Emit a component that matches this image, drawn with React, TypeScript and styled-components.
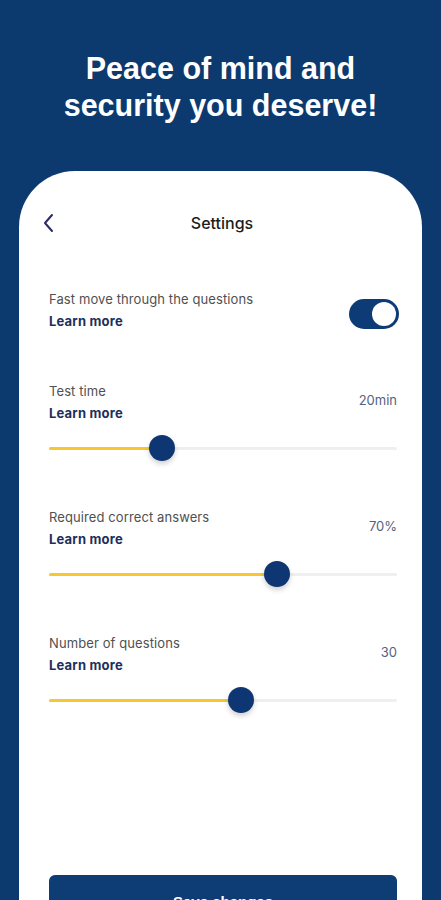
import { useState } from 'react';
import styled, { createGlobalStyle } from 'styled-components';

const GlobalStyle = createGlobalStyle`
  html, body {
    margin: 0;
    padding: 0;
    height: 100%;
    overflow: hidden;
    background: #0c3a6f;
  }
  * {
    box-sizing: border-box;
  }
`;

const Page = styled.div`
  display: flex;
  flex-direction: column;
  min-height: 100vh;
  background: #0c3a6f;
`;

const Heading = styled.h1`
  margin: 50px 0 47px;
  color: #ffffff;
  font-family: 'Liberation Sans', Arial, sans-serif;
  font-weight: 700;
  font-size: 30.5px;
  line-height: 37px;
  text-align: center;
`;

const Card = styled.div`
  display: flex;
  flex-direction: column;
  flex-grow: 1;
  margin: 0 19px;
  padding: 40px 25px 40px 30px;
  background: #ffffff;
  border-radius: 56px 56px 0 0;
  font-family: Inter, 'Open Sans', sans-serif;
`;

const TopBar = styled.div`
  display: grid;
  grid-template-columns: 40px 1fr 40px;
  align-items: center;
  height: 24px;
`;

const BackButton = styled.button`
  display: flex;
  align-items: center;
  padding: 0;
  margin-left: -8px;
  border: none;
  background: none;
  cursor: pointer;
`;

const Title = styled.div`
  text-align: center;
  font-size: 16px;
  font-weight: 500;
  color: #1c1c1c;
  margin-left: -2px;
`;

const Section = styled.div<{ $gap: number }>`
  margin-top: ${({ $gap }) => $gap}px;
`;

const Row = styled.div`
  display: flex;
  justify-content: space-between;
  align-items: center;
`;

const TextBlock = styled.div`
  display: flex;
  flex-direction: column;
  gap: 2px;
`;

const Label = styled.span`
  font-size: 13px;
  line-height: 20px;
  color: #505050;
  letter-spacing: 0.1px;
`;

const LearnMore = styled.a`
  font-size: 13px;
  line-height: 20px;
  font-weight: 700;
  color: #1d2f5c;
  letter-spacing: 0.2px;
  text-decoration: none;
  cursor: pointer;
`;

const Value = styled.span`
  font-size: 13px;
  color: #53627f;
  margin-bottom: 4px;
`;

const Toggle = styled.button<{ $on: boolean }>`
  position: relative;
  width: 50px;
  height: 30px;
  margin: 8px -2px 0 0;
  padding: 0;
  border: none;
  border-radius: 15px;
  background: ${({ $on }) => ($on ? '#0d3b76' : '#cfd4dc')};
  cursor: pointer;
`;

const Knob = styled.span<{ $on: boolean }>`
  position: absolute;
  top: 3px;
  left: ${({ $on }) => ($on ? '23px' : '3px')};
  width: 24px;
  height: 24px;
  border-radius: 50%;
  background: #ffffff;
`;

const SliderWrap = styled.div`
  position: relative;
  height: 30px;
  margin-top: 10px;
  display: flex;
  align-items: center;
`;

const Track = styled.div`
  width: 100%;
  height: 3px;
  border-radius: 2px;
  background: #eeeff1;
  overflow: hidden;
`;

const Fill = styled.div`
  height: 100%;
  background: #f8c630;
`;

const Thumb = styled.div`
  position: absolute;
  top: 2px;
  width: 26px;
  height: 26px;
  margin-left: -13px;
  border-radius: 50%;
  background: #0d3672;
  box-shadow: 0 3px 5px rgba(0, 0, 0, 0.18);
`;

const Spacer = styled.div`
  flex-grow: 1;
  min-height: 160px;
`;

const SaveButton = styled.button`
  width: 100%;
  height: 52px;
  flex-shrink: 0;
  border: none;
  border-radius: 6px;
  background: #0e3c74;
  color: #ffffff;
  font-family: 'Liberation Sans', Arial, sans-serif;
  font-size: 15px;
  font-weight: 700;
  cursor: pointer;
`;

type SliderSetting = {
  label: string;
  value: string;
  percent: number;
  gap: number;
};

const sliders: SliderSetting[] = [
  { label: 'Test time', value: '20min', percent: 32.5, gap: 50 },
  { label: 'Required correct answers', value: '70%', percent: 65.5, gap: 44 },
  { label: 'Number of questions', value: '30', percent: 55.2, gap: 44 },
];

function Slider({ percent }: { percent: number }) {
  return (
    <SliderWrap>
      <Track>
        <Fill style={{ width: `${percent}%` }} />
      </Track>
      <Thumb style={{ left: `${percent}%` }} />
    </SliderWrap>
  );
}

export default function App() {
  const [fastMove, setFastMove] = useState(true);

  return (
    <Page>
      <GlobalStyle />
      <Heading>
        Peace of mind and
        <br />
        security you deserve!
      </Heading>

      <Card>
        <TopBar>
          <BackButton aria-label="Back">
            <svg width="16" height="22" viewBox="0 0 16 22" fill="none">
              <path d="M11 3 L4 11 L11 19" stroke="#2b2b6b" strokeWidth="2" strokeLinecap="round" strokeLinejoin="round" />
            </svg>
          </BackButton>
          <Title>Settings</Title>
          <span />
        </TopBar>

        <Section $gap={54}>
          <Row>
            <TextBlock>
              <Label>Fast move through the questions</Label>
              <LearnMore>Learn more</LearnMore>
            </TextBlock>
            <Toggle $on={fastMove} onClick={() => setFastMove(!fastMove)}>
              <Knob $on={fastMove} />
            </Toggle>
          </Row>
        </Section>

        {sliders.map((s) => (
          <Section key={s.label} $gap={s.gap}>
            <Row>
              <TextBlock>
                <Label>{s.label}</Label>
                <LearnMore>Learn more</LearnMore>
              </TextBlock>
              <Value>{s.value}</Value>
            </Row>
            <Slider percent={s.percent} />
          </Section>
        ))}

        <Spacer />
        <SaveButton>Save changes</SaveButton>
      </Card>
    </Page>
  );
}
